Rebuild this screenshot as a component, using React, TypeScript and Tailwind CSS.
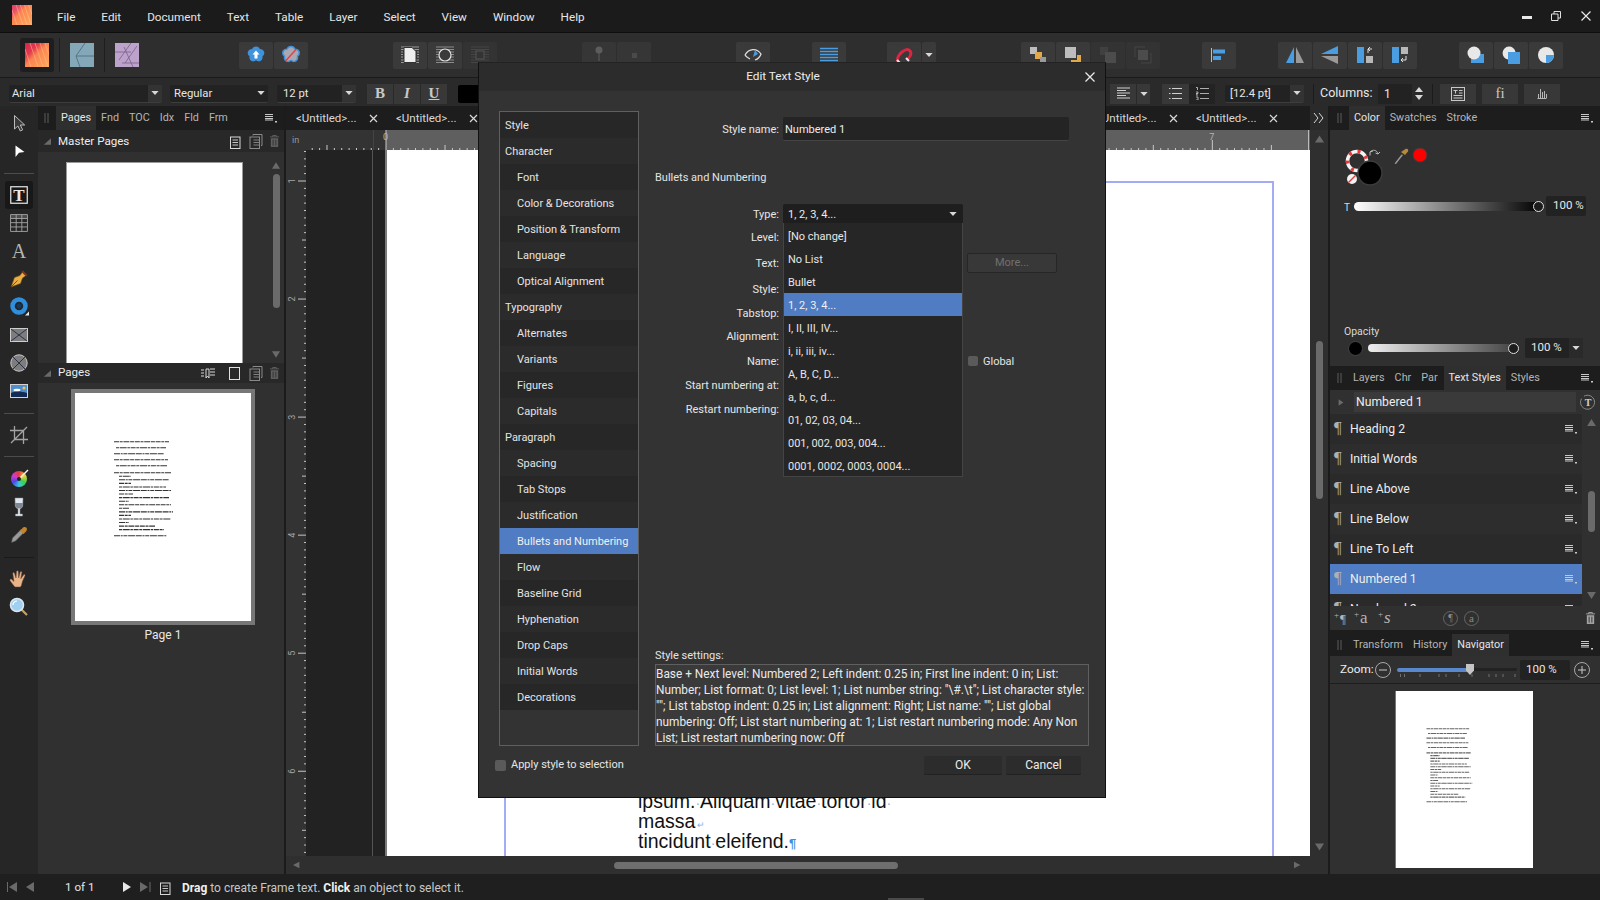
import React from "react";

const Ham = ({ className = "" }: { className?: string }) => (
  <svg width="14" height="12" viewBox="0 0 14 12" className={className}>
    <path d="M1 2.500h8M1 4.500h8M1 6.500h8M1 8h8" stroke="#c8c8c8" strokeWidth="1.200" />
    <rect x="11" y="9" width="2" height="1.500" fill="#c8c8c8" />
  </svg>
);
const Caret = ({ c = "#d8d8d8" }: { c?: string }) => (
  <svg width="8" height="4" viewBox="0 0 9 5"><path d="M0 0h9L4.500 5z" fill={c} /></svg>
);
const Tri = ({ d, c = "#6a6a6a", w = 10, h = 8 }: { d: string; c?: string; w?: number; h?: number }) => (
  <svg width={w} height={h} viewBox="0 0 10 8"><path d={d} fill={c} /></svg>
);
const Btn = ({ children, className = "" }: { children?: React.ReactNode; className?: string }) => (
  <div className={"w-[34px] h-[27px] flex items-center justify-center rounded-[2px] bg-[#3a3a3a] " + className}>{children}</div>
);
const Combo = ({ text, className = "", sep = true, pad = "pl-[4px]" }: { text: string; className?: string; sep?: boolean; pad?: string }) => (
  <div className={"h-[18px] flex items-center rounded-[2px] bg-[#222222] border-b border-[#3d3d3d] " + className}>
    <span className={"flex-1 pt-[2px] text-[11.300px] text-[#e6e6e6] whitespace-nowrap " + pad}>{text}</span>
    <div className={"w-[14px] h-full flex items-center justify-center " + (sep ? "bg-[#333333]" : "")}><Caret /></div>
  </div>
);

const PubLogo = ({ s = 24, id = "pl", light = false }: { s?: number; id?: string; light?: boolean }) => (
  <svg width={s} height={s} viewBox="0 0 24 24">
    <defs>
      <linearGradient id={id} x1="0" y1="0" x2="1" y2="1">
        <stop offset="0" stopColor={light ? "#e0405a" : "#d4234f"} /><stop offset={light ? "0.22" : "0.3"} stopColor={light ? "#e8506a" : "#e23a4e"} /><stop offset={light ? "0.4" : "0.48"} stopColor="#fb8450" /><stop offset="1" stopColor="#ffaa5c" />
      </linearGradient>
    </defs>
    <rect width="24" height="24" fill={`url(#${id})`} />
    <path d="M5 0l8 24M10 0l8 24M15 0l8 24M20 0l4 12M0 6l6 18" stroke={light ? "#ffd0a8" : "#ffc090"} strokeWidth="0.700" opacity="0.750" fill="none" />
  </svg>
);
const DesLogo = () => (
  <svg width="24" height="24" viewBox="0 0 24 24">
    <rect width="24" height="24" fill="#84a8b8" />
    <path d="M15 0L6 13l4 11M6 13h18" stroke="#4f6f80" strokeWidth="0.900" fill="none" />
  </svg>
);
const PhoLogo = () => (
  <svg width="24" height="24" viewBox="0 0 24 24">
    <rect width="24" height="24" fill="#bda3cb" />
    <path d="M16 0L4 17M22 3L10 20M0 9h16M7 20h17M9 4l9 20" stroke="#7a5f8c" strokeWidth="0.800" fill="none" />
  </svg>
);
const Flower = ({ off = false }: { off?: boolean }) => (
  <svg width="20" height="20" viewBox="0 0 20 20">
    <path d="M10 1.500c2.200 0 3.400 1.400 3.900 2.600 1.600.1 3.800 1 4.300 3 .4 1.900-.7 3.200-1.700 4 .3 1.600-.1 4-2 5-1.800.9-3.400.1-4.500-.8-1.100.9-2.700 1.700-4.500.8-1.900-1-2.300-3.400-2-5-1-.8-2.100-2.100-1.700-4 .5-2 2.700-2.900 4.300-3 .5-1.200 1.700-2.600 3.900-2.600z" fill={off ? "#a9a9b5" : "#3f93dc"} stroke={off ? "#3f93dc" : "none"} strokeWidth="1.400" />
    {off ? <path d="M5 15.500L15 4.500" stroke="#ee3a3a" strokeWidth="1.300" /> : <path d="M10 5.500l3.500 4h-2v4h-3v-4h-2z" fill="#fff" />}
  </svg>
);

const Tool = ({ children, active = false }: { children: React.ReactNode; active?: boolean }) => (
  <div className={"w-[28px] h-[28px] flex items-center justify-center rounded-[3px] " + (active ? "bg-[#181818]" : "")}>{children}</div>
);

const ToolRail = () => (
  <div className="w-[38px] bg-[#262626] flex flex-col items-center pt-[3px] shrink-0">
    <Tool><svg width="20" height="20" viewBox="0 0 20 20"><path d="M5.500 2.500v13.500l3.400-3 2.400 5 2.400-1.200-2.400-4.800h4.400z" fill="#3a3a3a" stroke="#bdbdbd" strokeWidth="1" /></svg></Tool>
    <Tool><svg width="20" height="20" viewBox="0 0 20 20"><path d="M6.500 4.500l9 6.500-5.500.8-3.500 4.200z" fill="#fff" /></svg></Tool>
    <div className="w-[30px] h-px bg-[#4c4c4c] mt-[8px] mb-[7px]" />
    <Tool active><svg width="18" height="18" viewBox="0 0 18 18"><rect x="0.750" y="0.750" width="16.500" height="16.500" fill="none" stroke="#e8e8e8" strokeWidth="1.200" /><text x="9" y="14.500" textAnchor="middle" fontFamily="Liberation Serif" fontWeight="700" fontSize="17" fill="#e8e8e8">T</text></svg></Tool>
    <Tool><svg width="18" height="18" viewBox="0 0 16 16"><path d="M.5.5h15v15H.5zM.5 4h15M.5 7.700h15M.5 11.500h15M5.500.5v15M10.500.5v15" fill="none" stroke="#a5a5a5" strokeWidth="0.800" /><rect x="0.500" y="0.500" width="15" height="3.500" fill="#a5a5a5" opacity="0.300" /></svg></Tool>
    <Tool><span className="font-['Liberation_Serif',serif] text-[20px] leading-none text-[#b5b5b5]">A</span></Tool>
    <Tool><svg width="20" height="20" viewBox="0 0 20 20"><path d="M13.500 3l3.500 3.500-3.500 2.500-2 5.500-9.500 3.500 3.500-9.500 5.500-2z" fill="#eaae44" stroke="#7b5216" strokeWidth="0.600" /><path d="M14 1.500l4.500 4.500-1.500 1.500-4.500-4.500z" fill="#7a3a1c" /><path d="M2 18l6.500-6.500" stroke="#5b3a10" strokeWidth="0.800" /></svg></Tool>
    <Tool><svg width="24" height="24" viewBox="0 0 24 24"><circle cx="12" cy="11" r="6.500" fill="none" stroke="#2f8fdc" strokeWidth="4.500" /><circle cx="12" cy="11" r="2.400" fill="#103a60" /><path d="M22 20.500v-4l-4 4z" fill="#e8e8e8" /></svg></Tool>
    <Tool><svg width="18" height="14" viewBox="0 0 18 14"><rect x="0.500" y="0.500" width="17" height="13" fill="#7d7d7d" stroke="#cfcfcf" /><path d="M1 1l16 12M17 1L1 13" stroke="#1e2a44" strokeWidth="0.900" /></svg></Tool>
    <Tool><svg width="18" height="18" viewBox="0 0 18 18"><circle cx="9" cy="9" r="8.200" fill="#7d7d7d" stroke="#c8c8c8" strokeWidth="1" /><path d="M3 3l12 12M15 3L3 15" stroke="#1e2a44" strokeWidth="0.900" /></svg></Tool>
    <Tool><svg width="18" height="14" viewBox="0 0 18 14"><rect width="18" height="14" fill="#d4d4d4" /><rect x="1" y="1" width="16" height="12" fill="#4f8fd0" /><path d="M1 13V9c4-2 10-2 16 0v4z" fill="#122a55" /><ellipse cx="7" cy="6" rx="3.500" ry="1.200" fill="#fff" /><circle cx="14" cy="4" r="1.600" fill="#f2c34a" /></svg></Tool>
    <div className="w-[30px] h-px bg-[#4c4c4c] mt-[8px] mb-[7px]" />
    <Tool><svg width="18" height="18" viewBox="0 0 18 18"><path d="M4.500 0v13.500H18M0 4.500h13.500V18M1 17L17 1" fill="none" stroke="#a3a3a3" strokeWidth="1.300" /></svg></Tool>
    <div className="w-[30px] h-px bg-[#4c4c4c] mt-[7px] mb-[8px]" />
    <Tool><div className="relative w-[16px] h-[16px] rounded-full bg-[conic-gradient(#e63a3a,#e8d63a,#3ad04a,#3ac8e0,#4a4ae0,#d03ad0,#e63a3a)]"><svg className="absolute -right-[2px] -top-[2px]" width="14" height="14" viewBox="0 0 14 14"><path d="M13 1L5 9" stroke="#f5f5f5" strokeWidth="1.400" /><circle cx="4" cy="10" r="2" fill="#222" /></svg></div></Tool>
    <Tool><svg width="14" height="20" viewBox="0 0 14 20"><path d="M3 1h8l-.2 7.500c-.2 2-1.800 3.200-2.800 3.300V17h2.500v2h-7v-2H6v-5.200c-1-.1-2.600-1.300-2.800-3.300z" fill="#dfe6ee" stroke="#8a8a8a" strokeWidth="0.500" /><path d="M3.100 6h7.800l-.1 2.500c-.2 2-2 3-3.800 3s-3.600-1-3.800-3z" fill="#7d8894" /></svg></Tool>
    <Tool><svg width="18" height="18" viewBox="0 0 18 18"><path d="M11 3.500l3 3-8.500 8.500-4 1.500 1-4.500z" fill="#9a9a9a" stroke="#555" strokeWidth="0.500" /><path d="M10 4.500l3.500 3.500 2-2c1.500-1.200 2-3.300.7-4.500-1.200-1.100-3.200-.6-4 .9z" fill="#c2852e" /></svg></Tool>
    <div className="w-[30px] h-px bg-[#1a1a1a] mt-[8px] mb-[7px]" />
    <Tool><svg width="20" height="20" viewBox="0 0 20 20"><path d="M6 18c-1.500-1.500-4-5-5-6.500-.5-1 .8-2 1.800-1L5 12.500 3.800 4.500c-.1-1 1.500-1.300 1.700-.2L7 9 7.500 2.500c.1-1.100 1.800-1 1.800.1L9.700 9l1.500-6c.3-1 1.800-.7 1.700.3L11.800 9.800l2.700-3.800c.7-.9 2-.2 1.500.8-1.200 2.500-2.500 5.200-3 7.200-.4 2-1 4-2 4z" fill="#eab48a" stroke="#6a4a36" strokeWidth="0.500" /></svg></Tool>
    <Tool><svg width="20" height="20" viewBox="0 0 20 20"><path d="M12.500 12.500l5.500 5.500" stroke="#c8a25a" strokeWidth="2.200" /><circle cx="8" cy="8" r="6.500" fill="#9fd0f2" stroke="#dbe6ee" strokeWidth="1.600" /><path d="M4 8a4 4 0 0 1 4-4" stroke="#fff" strokeWidth="1.200" fill="none" /></svg></Tool>
  </div>
);

const dashes = ["5 0.700 3 0.700 6 0.700 4 0.700", "3 0.700 7 0.700 2.500 0.700 5 0.700", "6 0.700 2 0.700 4 0.700 7 0.700"];
const listLens = [52, 12, 50, 12, 47, 52, 14, 50, 10, 52, 10, 54, 12, 52, 10, 36, 45];
const thumbLines: [number, number, number, number][] = [
  [39, 48.700, 55, 0],[41, 54.700, 50, 1],[39, 60.700, 50, 2],[39, 66.700, 54, 0],[41, 72.700, 51, 1],
  ...listLens.map((l, i): [number, number, number, number] => [i === 0 ? 39 : 44, 79.700 + i * 3.560, i === 0 ? l + 5 : l, i % 3]),
  [39, 142.700, 53, 2],
];
const Thumb = ({ w, h, soft = false }: { w: number; h: number; soft?: boolean }) => (
  <svg width={w} height={h} viewBox="0 0 176 228" className="bg-white block">
    {thumbLines.map(([x, y, l, d], i) => (
      <line key={i} x1={x} x2={x + l} y1={y} y2={y} stroke={soft ? "#666" : "#333"} strokeWidth={soft ? 1.400 : 1.100} strokeDasharray={dashes[d]} />
    ))}
  </svg>
);

const PanelTab = ({ t, active = false, className = "" }: { t: string; active?: boolean; className?: string }) => (
  <div className={"h-full flex items-center px-[5px] text-[10.800px] whitespace-nowrap " + (active ? "bg-[#2f2f2f] text-[#e6e6e6] " : "text-[#b5b5b5] ") + className}>{t}</div>
);
const Grip = () => (
  <svg width="5" height="10" viewBox="0 0 5 10" className="shrink-0"><path d="M1 0v10M4 0v10" stroke="#5c5c5c" /></svg>
);
const SmallDoc = ({ c = "#d8d8d8", stack = false }: { c?: string; stack?: boolean }) => (
  <svg width="14" height="15" viewBox="0 0 14 15">
    {stack && <path d="M4 1.500V.5h9v11h-1" fill="none" stroke={c} />}
    <rect x={stack ? 1 : 2.500} y="3" width="9.500" height="11.500" fill="none" stroke={c} />
    <path d="M4.500 6h5.500M4.500 8.500h5.500M4.500 11h5.500" stroke={c} strokeWidth="0.900" />
  </svg>
);
const Trash = ({ c = "#5f5f5f" }: { c?: string }) => (
  <svg width="11" height="14" viewBox="0 0 12 14"><path d="M1 2.500h10M4 2.500V1h4v1.500" stroke={c} fill="none" /><path d="M2 4h8v9.500H2z" fill={c} /><path d="M4.500 5.500v6.500M7.500 5.500v6.500" stroke="#303030" /></svg>
);

const PagesPanel = () => (
  <div className="w-[246px] shrink-0 flex flex-col bg-[#303030]">
    <div className="h-[24px] bg-[#1d1d1d] flex items-center pl-[6px] shrink-0">
      <Grip />
      <div className="w-[7px]" />
      <PanelTab t="Pages" active />
      <PanelTab t="Fnd" />
      <PanelTab t="TOC" />
      <PanelTab t="Idx" />
      <PanelTab t="Fld" />
      <PanelTab t="Frm" />
      <div className="flex-1" />
      <Ham className="mr-[6px]" />
    </div>
    <div className="h-[22px] bg-[#282828] flex items-center pl-[5px] pr-[4px] shrink-0">
      <Tri d="M10 0v8H1z" w={8} h={7} />
      <span className="ml-[7px] pt-[1px] text-[11.600px] text-[#ededed] flex-1">Master Pages</span>
      <SmallDoc />
      <div className="w-[7px]" />
      <SmallDoc c="#8a8a8a" stack />
      <div className="w-[6px]" />
      <Trash />
    </div>
    <div className="h-[211px] flex pl-[28px] pt-[10px] shrink-0 overflow-hidden">
      <div className="w-[177px] h-[201px] bg-white border border-[#9a9a9a] border-b-0" />
      <div className="w-[12px] ml-[27px] flex flex-col items-center">
        <Tri d="M5 0l5 8H0z" w={8} h={7} />
        <div className="w-[7px] h-[134px] mt-[5px] rounded-[4px] bg-[#6a6a6a]" />
        <div className="mt-[43px]"><Tri d="M0 0h10L5 8z" w={8} h={7} /></div>
      </div>
    </div>
    <div className="h-[20px] bg-[#282828] flex items-center pl-[5px] pr-[4px] shrink-0">
      <Tri d="M10 0v8H1z" w={8} h={7} />
      <span className="ml-[7px] text-[11.600px] text-[#ededed] flex-1">Pages</span>
      <svg width="14" height="12" viewBox="0 0 14 12" className="mr-[14px]"><path d="M0 3h3M0 6h3M0 9h3M5 2h3v9l-1.500-2L5 11zM9 2h5M9 5h5M9 8h5" stroke="#d8d8d8" fill="none" /></svg>
      <svg width="11" height="13" viewBox="0 0 11 13" className="mr-[9px]"><rect x="0.500" y="0.500" width="10" height="12" fill="none" stroke="#e0e0e0" /></svg>
      <SmallDoc c="#8a8a8a" stack />
      <div className="w-[6px]" />
      <Trash />
    </div>
    <div className="flex-1 flex flex-col items-center pt-[6px] pl-[4px]">
      <div className="border-[4px] border-[#777777]"><Thumb w={176} h={228} /></div>
      <div className="mt-[1px] text-[12px] leading-[18px] text-[#e8e8e8]">Page 1</div>
    </div>
  </div>
);

const PPI = 118.050;
const TopRuler = () => {
  const ticks = [];
  for (let i = -13; i <= 120; i++) {
    const x = 100 + (i * PPI) / 16;
    if (x < 20 || x > 1022) continue;
    const h = i % 16 === 0 ? (i === 0 ? 20 : 10) : i % 8 === 0 ? 5 : 2;
    ticks.push(<line key={i} x1={x} x2={x} y1={20 - h} y2={20} stroke="#c9c9c9" />);
  }
  return (
    <svg width="1024" height="20" viewBox="0 0 1024 20" className="block">
      <rect width="1024" height="20" fill="#333333" />
      <rect x="100" width="924" height="20" fill="#5f5f5f" />
      <rect x="87" width="1" height="20" fill="#444" />
      <rect x="1022" width="1" height="20" fill="#bbb" />
      {ticks}
      <text x="6" y="13" fontSize="9" fontFamily="Roboto" fill="#9a9a9a">in</text>
      {[0, 7].map((n) => (
        <text key={n} x={100 + n * PPI - 3} y="10" fontSize="9" fontFamily="Roboto" fill="#b5b5b5">{n}</text>
      ))}
    </svg>
  );
};
const LeftRuler = () => {
  const ticks = [];
  for (let i = -7; i <= 96; i++) {
    const y = 31 + (i * PPI) / 16;
    if (y < 0 || y > 706) continue;
    const w = i % 16 === 0 ? 8 : i % 8 === 0 ? 4 : 2;
    ticks.push(<line key={i} x1={20 - w} x2={20} y1={y} y2={y} stroke="#c4c4c4" />);
  }
  return (
    <svg width="20" height="706" viewBox="0 0 20 706" className="block shrink-0">
      <rect width="20" height="706" fill="#333333" />
      {ticks}
      {[1, 2, 3, 4, 5, 6].map((n) => (
        <text key={n} x="0" y="0" fontSize="9" fontFamily="Roboto" fill="#a5a5a5" textAnchor="middle" transform={`translate(9 ${31 + (n - 1) * PPI}) rotate(-90)`}>{n}</text>
      ))}
    </svg>
  );
};

const Dot = () => <span className="text-[14px] text-[#7fb6e6]">·</span>;

const DocArea = () => (
  <div className="w-[1024px] shrink-0 flex flex-col ml-[2px]">
    <div className="h-[24px] bg-[#1d1d1d] flex shrink-0">
      {Array.from({ length: 10 }).map((_, i) => (
        <div key={i} className="w-[100px] shrink-0 flex items-center pl-[10px] pt-[1px] text-[11.500px] text-[#d8d8d8]">
          <span className="w-[73px] whitespace-nowrap">&lt;Untitled&gt;...</span>
          <svg width="9" height="9" viewBox="0 0 9 9"><path d="M1 1l7 7M8 1L1 8" stroke="#d8d8d8" strokeWidth="1.200" /></svg>
        </div>
      ))}
    </div>
    <TopRuler />
    <div className="h-[706px] flex shrink-0">
      <LeftRuler />
      <div className="w-[67px] bg-[#222222] border-r border-[#555555] shrink-0" />
      <div className="w-[12px] bg-[#222222] shrink-0" />
      <div className="flex-1 bg-white border-l-[2px] border-[#7a7a7a] relative overflow-hidden">
        <div className="absolute left-[117px] top-[31px] w-[770px] h-[720px] border-[2px] border-[#a4abf4]" />
        <div className="absolute left-[251px] bottom-[5px] font-['Liberation_Sans',sans-serif] text-[19.500px] text-[#111] whitespace-nowrap">
          <div className="h-[20px] leading-[20px]">ipsum.<Dot />Aliquam<Dot />vitae<Dot />tortor<Dot />id<Dot /></div>
          <div className="h-[20px] leading-[20px]">massa<span className="text-[9px] text-[#7fb6e6] ml-[2px]">↵</span></div>
          <div className="h-[20px] leading-[20px]">tincidunt<Dot />eleifend.<span className="text-[13px] text-[#3f8fdc] font-bold">¶</span></div>
        </div>
      </div>
    </div>
    <div className="h-[18px] bg-[#2f2f2f] flex items-center pl-[7px] shrink-0">
      <Tri d="M8 0v8L0 4z" w={8} h={8} />
      <div className="w-[284px] h-[7px] ml-[313px] rounded-[4px] bg-[#6e6e6e]" />
      <div className="ml-[396px]"><Tri d="M0 0v8l8-4z" w={8} h={8} /></div>
    </div>
  </div>
);

const StyleRow = ({ t, active = false, alt = false }: { t: string; active?: boolean; alt?: boolean }) => (
  <div className={"h-[30px] shrink-0 flex items-center pl-[4px] pr-[4px] " + (active ? "bg-[#4f7cc2]" : alt ? "bg-[#2a2a2a]" : "bg-[#2d2d2d]")}>
    <span className="w-[16px] -mt-[3px] text-[17px] leading-none text-[#b0b0b0] font-['Liberation_Serif',serif]">¶</span>
    <span className="flex-1 text-[12.200px] text-[#ededed]">{t}</span>
    <Ham />
  </div>
);

const NumBox = ({ t, className = "" }: { t: string; className?: string }) => (
  <div className={"h-[20px] flex items-center rounded-[2px] bg-[#222222] text-[11.500px] whitespace-nowrap text-[#e8e8e8] " + className}>{t}</div>
);
const Knob = () => <div className="w-[11px] h-[11px] rounded-full border-[1.500px] border-[#e0e0e0] bg-[#1c1c1c] shrink-0" />;

const RightPanel = () => (
  <div className="w-[270px] shrink-0 flex flex-col bg-[#303030] ml-[2px]">
    <div className="h-[24px] bg-[#1d1d1d] flex items-center pl-[7px] shrink-0">
      <Grip />
      <div className="w-[7px]" />
      <PanelTab t="Color" active />
      <PanelTab t="Swatches" />
      <PanelTab t="Stroke" />
      <div className="flex-1" />
      <Ham className="mr-[6px]" />
    </div>
    <div className="h-[236px] flex flex-col shrink-0 pl-[14px]">
      <svg width="96" height="52" viewBox="0 0 96 52" className="mt-[11px] block">
        <circle cx="13" cy="20" r="9.500" fill="none" stroke="#f4f4f4" strokeWidth="3.500" />
        <circle cx="13" cy="20" r="9.500" fill="none" stroke="#e33b3b" strokeWidth="3.500" strokeDasharray="3 6" />
        <circle cx="26" cy="32" r="12" fill="#000" stroke="#3c3c3c" strokeWidth="1.500" />
        <circle cx="8" cy="38" r="5" fill="#f2f2f2" /><path d="M4.500 41.500l7-7" stroke="#e33b3b" strokeWidth="1.500" />
        <path d="M26 11c3-3 7-2 8 2M26 11l3-1M26 11v3.500M34 13l2-2M34 13l-2.500-1" stroke="#b8b8b8" fill="none" />
        <path d="M59 14l-7 9-1.500-.5 7-9z" fill="#999" /><path d="M57 11l4 3 3-3.500c1-2-1-3.500-2.500-2.500z" fill="#b58a3e" />
        <circle cx="76" cy="14" r="7" fill="#ff0000" stroke="#3c3c3c" />
      </svg>
      <div className="h-[20px] mt-[3px] flex items-center">
        <span className="w-[10px] text-[10px] text-[#d8d8d8] mt-[2px]">T</span>
        <div className="w-[187px] h-[9px] rounded-[5px] bg-[linear-gradient(90deg,#fff,#000)] flex justify-end items-center">
          <div className="-mr-[3px]"><Knob /></div>
        </div>
        <NumBox t="100 %" className="w-[40px] ml-[5px] pl-[7px]" />
      </div>
      <div className="text-[10.500px] leading-[12px] mt-[110px] text-[#d8d8d8]">Opacity</div>
      <div className="h-[20px] flex items-center">
        <div className="w-[15px] h-[15px] rounded-full bg-black border border-[#444] ml-[4px]" />
        <div className="w-[146px] h-[8px] rounded-[4px] ml-[5px] bg-[linear-gradient(90deg,#eee,#444)] flex justify-end items-center">
          <div className="-mr-[5px]"><Knob /></div>
        </div>
        <NumBox t="100 %" className="w-[44px] ml-[11px] pl-[6px] rounded-r-none" />
        <div className="w-[14px] h-[20px] bg-[#2a2a2a] flex items-center justify-center"><Caret /></div>
      </div>
    </div>

    <div className="h-[24px] bg-[#1d1d1d] flex items-center pl-[7px] shrink-0">
      <Grip />
      <div className="w-[6px]" />
      <PanelTab t="Layers" />
      <PanelTab t="Chr" />
      <PanelTab t="Par" className="mr-[1px]" />
      <PanelTab t="Text Styles" active />
      <PanelTab t="Styles" />
      <div className="flex-1" />
      <Ham className="mr-[6px]" />
    </div>
    <div className="h-[24px] flex items-center pl-[7px] shrink-0">
      <Tri d="M2 0l6 4-6 4z" w={8} h={9} />
      <div className="ml-[9px] w-[222px] h-[20px] bg-[#3a3a3a] flex items-center pl-[2px] pt-[1px] text-[12.200px] text-[#ededed]">Numbered 1</div>
      <svg width="16" height="16" viewBox="0 0 16 16" className="ml-[4px]"><path d="M4 2.200a7 7 0 1 1-2.500 2.500" fill="none" stroke="#8a8a8a" /><text x="8" y="11.500" textAnchor="middle" fontSize="10" fontWeight="700" fontFamily="Liberation Serif" fill="#d0d0d0">T</text></svg>
    </div>
    <div className="h-[192px] flex shrink-0 overflow-hidden">
      <div className="w-[252px] flex flex-col shrink-0">
        <StyleRow t="Heading 2" alt />
        <StyleRow t="Initial Words" />
        <StyleRow t="Line Above" alt />
        <StyleRow t="Line Below" />
        <StyleRow t="Line To Left" alt />
        <StyleRow t="Numbered 1" active />
        <StyleRow t="Numbered 2" alt />
      </div>
      <div className="flex-1 flex flex-col items-center pt-[5px]">
        <Tri d="M5 0l5 8H0z" w={9} h={7} />
        <div className="w-[7px] h-[41px] mt-[65px] rounded-[4px] bg-[#6a6a6a]" />
        <div className="mt-[60px]"><Tri d="M0 0h10L5 8z" w={9} h={7} /></div>
      </div>
    </div>
    <div className="h-[24px] flex items-center pl-[4px] pr-[4px] shrink-0 font-['Liberation_Serif',serif] text-[#b5b5b5]">
      <div className="w-[20px] flex items-start"><span className="text-[9px] leading-[12px] mr-[1px]">+</span><span className="text-[13px] leading-[16px] mt-[2px]">¶</span></div>
      <div className="w-[24px] flex items-start"><span className="text-[9px] leading-[12px] mr-[1px]">+</span><span className="text-[17px] leading-[20px]">a</span></div>
      <div className="w-[65px] flex items-start"><span className="text-[9px] leading-[12px] mr-[1px]">+</span><span className="text-[17px] leading-[20px] italic">s</span></div>
      <div className="w-[15px] h-[15px] rounded-full border border-[#666] flex items-center justify-center text-[10px] leading-[12px] text-[#8a8a8a] mr-[6px]">¶</div>
      <div className="w-[15px] h-[15px] rounded-full border border-[#666] flex items-center justify-center text-[11px] leading-[12px] text-[#8a8a8a]">a</div>
      <div className="flex-1" />
      <Trash c="#a5a5a5" />
    </div>
    <div className="h-[4px] bg-[#1d1d1d] shrink-0" />

    <div className="h-[22px] bg-[#1d1d1d] flex items-center pl-[7px] shrink-0">
      <Grip />
      <div className="w-[6px]" />
      <PanelTab t="Transform" />
      <PanelTab t="History" />
      <PanelTab t="Navigator" active />
      <div className="flex-1" />
      <Ham className="mr-[6px]" />
    </div>
    <div className="h-[28px] flex items-center pl-[10px] border-b border-[#1d1d1d] shrink-0">
      <span className="text-[11.800px] text-[#ededed] w-[35px]">Zoom:</span>
      <svg width="16" height="16" viewBox="0 0 16 16"><circle cx="8" cy="8" r="7.500" fill="none" stroke="#a8a8a8" /><path d="M4 8h8" stroke="#c8c8c8" /></svg>
      <div className="relative w-[120px] h-[3px] ml-[6px] bg-[#222222] rounded-[2px]">
        <div className="w-[73px] h-[4px] bg-[#5a88cc] rounded-[2px]" />
        <div className="absolute left-[69px] -top-[4px] w-[8px] h-[11px] bg-[#c4c4c4] [clip-path:polygon(0_0,100%_0,100%_60%,50%_100%,0_60%)]" />
        <svg width="120" height="5" viewBox="0 0 120 5" className="absolute left-0 top-[6px]"><path d="M3.500 0v3M7.500 0v3M23 0v3M42 0v3M49 0v3M62 0v3M75 0v3M92 0v3M99 0v3M106 0v3M118 0v3" stroke="#707070" /></svg>
      </div>
      <NumBox t="100 %" className="w-[50px] ml-[3px] pl-[6px]" />
      <svg width="16" height="16" viewBox="0 0 16 16" className="ml-[4px]"><circle cx="8" cy="8" r="7.500" fill="none" stroke="#a8a8a8" /><path d="M4 8h8M8 4v8" stroke="#c8c8c8" /></svg>
    </div>
    <div className="flex-1 flex flex-col items-center pt-[7px] pr-[2px]">
      <div className="border-l border-[#777]"><Thumb w={137} h={177} soft /></div>
    </div>
  </div>
);

const sections: [string, boolean][] = [
  ["Style", false],["Character", false],["Font", true],["Color & Decorations", true],["Position & Transform", true],["Language", true],["Optical Alignment", true],
  ["Typography", false],["Alternates", true],["Variants", true],["Figures", true],["Capitals", true],["Paragraph", false],["Spacing", true],["Tab Stops", true],["Justification", true],
  ["Bullets and Numbering", true],["Flow", true],["Baseline Grid", true],["Hyphenation", true],["Drop Caps", true],["Initial Words", true],["Decorations", true],
];
const listOptions = ["[No change]","No List","Bullet","1, 2, 3, 4...","I, II, III, IV...","i, ii, iii, iv...","A, B, C, D...","a, b, c, d...","01, 02, 03, 04...","001, 002, 003, 004...","0001, 0002, 0003, 0004..."];

const FormRow = ({ label, className = "", children }: { label: string; className?: string; children?: React.ReactNode }) => (
  <div className={"h-[20px] flex items-center shrink-0 " + className}>
    <div className="w-[124px] pt-[2px] text-right text-[#e6e6e6] whitespace-nowrap">{label}</div>
    {children}
  </div>
);

const Dialog = () => (
  <div className="absolute left-[478px] top-[62px] w-[628px] h-[736px] z-10 bg-[#333333] border border-[#111111] border-t-[#222] flex flex-col text-[11px]">
    <div className="h-[28px] bg-[#2c2c2c] flex items-center justify-center pr-[18px] relative shrink-0">
      <span className="text-[11.800px] text-[#ededed]">Edit Text Style</span>
      <svg className="absolute right-[10px] top-[9px]" width="10" height="10" viewBox="0 0 10 10"><path d="M.5.5l9 9M9.500.5l-9 9" stroke="#e8e8e8" strokeWidth="1.300" /></svg>
    </div>
    <div className="flex pl-[20px] pt-[20px] shrink-0">
      <div className="w-[140px] h-[635px] border border-[#5f5f5f] shrink-0">
        {sections.map(([s, ind], i) => (
          <div key={s} className={"h-[26px] pt-[2px] flex items-center whitespace-nowrap " + (ind ? "pl-[17px] " : "pl-[5px] ") + (s === "Bullets and Numbering" ? "bg-[#4f7cc2] text-[#f0f0f0]" : (i % 2 ? "bg-[#2b2b2b] " : "bg-[#272727] ") + "text-[#e4e4e4]")}>{s}</div>
        ))}
      </div>
      <div className="w-[434px] ml-[16px] h-[635px] flex flex-col shrink-0 relative">
        <div className="h-[24px] mt-[6px] flex items-center shrink-0">
          <div className="w-[124px] pt-[3px] text-right text-[#e6e6e6]">Style name:</div>
          <div className="ml-[4px] w-[286px] h-[24px] bg-[#242424] rounded-[2px] border-b border-[#444] flex items-center pl-[2px] pt-[3px] text-[#ededed]">Numbered 1</div>
        </div>
        <div className="mt-[29px] h-[16px] leading-[16px] text-[#e4e4e4] shrink-0">Bullets and Numbering</div>
        <FormRow label="Type:" className="mt-[18px]">
          <div className="ml-[4px] w-[180px] h-[20px] bg-[#1e1e1e] rounded-[2px] flex items-center pl-[5px] pr-[6px] text-[#ededed]">
            <span className="flex-1 pt-[2px]">1, 2, 3, 4...</span><Caret />
          </div>
        </FormRow>
        <FormRow label="Level:" className="mt-[3px]" />
        <FormRow label="Text:" className="mt-[6px]">
          <div className="ml-[188px] w-[90px] h-[20px] rounded-[2px] border border-[#262626] bg-[#383838] flex items-center justify-center pt-[1px] text-[#707070]">More...</div>
        </FormRow>
        <FormRow label="Style:" className="mt-[6px]" />
        <FormRow label="Tabstop:" className="mt-[4px]" />
        <FormRow label="Alignment:" className="mt-[3px]" />
        <FormRow label="Name:" className="mt-[5px]">
          <div className="ml-[189px] w-[10px] h-[10px] rounded-[2px] bg-[#5a5a5a]" />
          <span className="ml-[5px] pt-[2px] text-[#e4e4e4]">Global</span>
        </FormRow>
        <FormRow label="Start numbering at:" className="mt-[4px]" />
        <FormRow label="Restart numbering:" className="mt-[4px]" />

        <div className="absolute left-[128px] top-[112px] w-[180px] h-[254px] bg-[#262626] border border-[#444444] border-t-0 pt-[1px] z-20">
          {listOptions.map((o) => (
            <div key={o} className={"h-[23px] flex items-center pl-[4px] pt-[3px] whitespace-nowrap " + (o === "1, 2, 3, 4..." ? "bg-[#4f7cc2] text-[#f0f0f0]" : "text-[#e6e6e6]")}>{o}</div>
          ))}
        </div>

        <div className="mt-auto leading-[14px] pt-[1px] h-[14px] text-[#e4e4e4]">Style settings:</div>
        <div className="mt-[2px] h-[82px] border border-[#5f5f5f] bg-[#3a3a3a] pt-[1px] text-[11.850px] leading-[16px] text-[#eaeaea] whitespace-nowrap">
          <div>Base + Next level: Numbered 2; Left indent: 0.25 in; First line indent: 0 in; List:</div>
          <div>Number; List format: 0; List level: 1; List number string: "\#.\t"; List character style:</div>
          <div>""; List tabstop indent: 0.25 in; List alignment: Right; List name: ""; List global</div>
          <div>numbering: Off; List start numbering at: 1; List restart numbering mode: Any Non</div>
          <div>List; List restart numbering now: Off</div>
        </div>
      </div>
    </div>
    <div className="flex items-center pl-[16px] mt-[9px] h-[20px] shrink-0">
      <div className="w-[11px] h-[11px] rounded-[2px] bg-[#5a5a5a]" />
      <span className="ml-[5px] pt-[1px] text-[#e6e6e6]">Apply style to selection</span>
      <div className="flex-1" />
      <div className="w-[78px] h-[19px] rounded-[2px] bg-[#2c2c2c] border-b border-[#222] flex items-center justify-center text-[12px] text-[#ededed]">OK</div>
      <div className="ml-[4px] w-[75px] h-[19px] rounded-[2px] bg-[#2c2c2c] border-b border-[#222] flex items-center justify-center text-[12px] text-[#ededed] mr-[24px]">Cancel</div>
    </div>
  </div>
);

const G = ({ children }: { children: React.ReactNode }) => <div className="flex gap-px">{children}</div>;

const Toolbar = () => (
  <div className="h-[45px] bg-[#2e2e2e] border-b border-[#1b1b1b] flex items-center shrink-0">
    <div className="ml-[20px] w-[34px] h-[34px] bg-[#1e1e1e] rounded-[3px] flex items-center justify-center"><PubLogo /></div>
    <div className="ml-[5px] w-px h-[34px] bg-[#1e1e1e]" />
    <div className="ml-[10px]"><DesLogo /></div>
    <div className="ml-[10px] w-px h-[34px] bg-[#1e1e1e]" />
    <div className="ml-[10px]"><PhoLogo /></div>
    <div className="ml-[100px]"><G><Btn><Flower /></Btn><Btn><Flower off /></Btn></G></div>
    <div className="ml-[85px]"><G>
      <Btn><svg width="18" height="18" viewBox="0 0 18 18"><path d="M0 1h18M0 3.500h18M0 14h18M0 16.500h18M0 6h2M0 8.500h2M0 11h2M16 6h2M16 8.500h2M16 11h2" stroke="#9a9a9a" /><path d="M3 1.500h8l4 4v11H3z" fill="#eee" stroke="#333" /></svg></Btn>
      <Btn><svg width="18" height="18" viewBox="0 0 18 18"><path d="M0 1h18M0 3.500h18M0 6h18M0 8.500h18M0 11h18M0 14h18M0 16.500h18" stroke="#8a8a8a" /><circle cx="9" cy="9" r="6" fill="#3a3a3a" stroke="#e0e0e0" strokeWidth="1.200" /></svg></Btn>
      <Btn className="bg-[#333333]"><svg width="18" height="18" viewBox="0 0 18 18"><path d="M0 1h18M0 3.500h18M0 6h18M0 8.500h18M0 11h18M0 14h18M0 16.500h18" stroke="#454545" /><rect x="5" y="5" width="8" height="8" fill="#333" stroke="#555" /></svg></Btn>
    </G></div>
    <div className="ml-[85px]"><G>
      <Btn className="bg-[#363636]"><svg width="10" height="20" viewBox="0 0 10 20"><circle cx="5" cy="5" r="3.500" fill="#5c5c5c" /><path d="M5 8v8" stroke="#5c5c5c" /></svg></Btn>
      <Btn className="bg-[#363636]"><div className="w-[5px] h-[5px] bg-[#4a4a4a]" /></Btn>
    </G></div>
    <Btn className="ml-[85px]"><svg width="18" height="16" viewBox="0 0 18 16"><path d="M1 8c4-7 12-7 16-1-1 3-3 5-6 6M6 12c-2-1-4-2-5-4" fill="none" stroke="#e0e0e0" strokeWidth="1.300" /><path d="M9 10l2-7 3 4z" fill="#4a9de0" /></svg></Btn>
    <Btn className="ml-[42px]"><svg width="18" height="16" viewBox="0 0 18 16"><path d="M0 1.500h18M0 4.500h18M0 7.500h18M0 10.500h18M0 13.500h18" stroke="#4a9de0" strokeWidth="1.300" /></svg></Btn>
    <div className="ml-[41px] flex">
      <Btn className="bg-[#1c1c1c]"><svg width="18" height="18" viewBox="0 0 18 18"><path d="M3 15.500c-1.500-3 1-7 4-9.500s6-3.500 8-1 0 6-3 9" fill="none" stroke="#dc2540" strokeWidth="3" /><path d="M2 14l3 3M11 12l3 3" stroke="#e8e8e8" strokeWidth="2" /></svg></Btn>
      <div className="w-[14px] h-[27px] ml-px bg-[#3a3a3a] rounded-[2px] flex items-center justify-center"><Caret /></div>
    </div>
    <div className="ml-[85px]"><G>
      <Btn><svg width="18" height="18" viewBox="0 0 18 18"><rect x="1" y="1" width="7" height="7" fill="#bdbdbd" /><rect x="6" y="6" width="7" height="7" fill="#e2a94a" /><rect x="11" y="11" width="6" height="6" fill="#9a9a9a" /></svg></Btn>
      <Btn><svg width="18" height="18" viewBox="0 0 18 18"><rect x="1" y="1" width="11" height="11" fill="#bdbdbd" /><path d="M13 9h4v8H7v-3h6z" fill="#e2a94a" /></svg></Btn>
      <Btn className="bg-[#333333]"><svg width="18" height="18" viewBox="0 0 18 18"><rect x="1" y="1" width="8" height="8" fill="#404040" /><rect x="6" y="6" width="11" height="11" fill="#4c4c4c" /></svg></Btn>
      <Btn className="bg-[#333333]"><svg width="18" height="18" viewBox="0 0 18 18"><rect x="4" y="4" width="10" height="10" fill="#4c4c4c" /><path d="M1 1h10M1 1v10M7 17h10V7" fill="none" stroke="#444" /></svg></Btn>
    </G></div>
    <Btn className="ml-[42px]"><svg width="16" height="14" viewBox="0 0 16 14"><path d="M.5 0v14" stroke="#bdbdbd" /><rect x="2" y="1.500" width="12" height="4" fill="#4a9de0" /><rect x="2" y="8" width="8" height="4" fill="#4a9de0" /></svg></Btn>
    <div className="ml-[42px]"><G>
      <Btn><svg width="18" height="18" viewBox="0 0 18 18"><path d="M8 1v16H0z" fill="#4a9de0" /><path d="M10 1v16h8z" fill="#9a9a9a" /></svg></Btn>
      <Btn><svg width="18" height="18" viewBox="0 0 18 18"><path d="M17 0v8H0z" fill="#4a9de0" /><path d="M17 10v8L0 10z" fill="#9a9a9a" /></svg></Btn>
      <Btn><svg width="18" height="18" viewBox="0 0 18 18"><rect x="1" y="1" width="7" height="16" fill="#4a9de0" /><rect x="10" y="10" width="7" height="7" fill="#b8b8b8" /><path d="M12 7V3h4M12 3l2-2M12 3l2 2" stroke="#e0e0e0" fill="none" /></svg></Btn>
      <Btn><svg width="18" height="18" viewBox="0 0 18 18"><rect x="1" y="1" width="7" height="16" fill="#4a9de0" /><rect x="10" y="1" width="7" height="7" fill="#b8b8b8" /><path d="M15 10v4h-5M10 14l2-2M10 14l2 2" stroke="#e0e0e0" fill="none" /></svg></Btn>
    </G></div>
    <div className="ml-[42px]"><G>
      <Btn><svg width="18" height="18" viewBox="0 0 18 18"><path d="M8 8h9v9H4v-4h4z" fill="#4a9de0" /><circle cx="7" cy="7" r="6.500" fill="#e8e8e8" /></svg></Btn>
      <Btn><svg width="18" height="18" viewBox="0 0 18 18"><rect x="6" y="6" width="12" height="12" fill="#4a9de0" /><path d="M6 13.500A6.500 6.500 0 1 1 13.500 6H6z" fill="#e8e8e8" /></svg></Btn>
      <Btn><svg width="18" height="18" viewBox="0 0 18 18"><circle cx="9" cy="9" r="8" fill="#e8e8e8" /><path d="M9 9h8a8 8 0 0 1-8 8z" fill="#4a9de0" /></svg></Btn>
    </G></div>
  </div>
);

const FmtBtn = ({ children, className = "" }: { children: React.ReactNode; className?: string }) => (
  <div className={"h-[20px] flex items-center justify-center bg-[#383838] font-['Liberation_Serif',serif] text-[15px] text-[#c8c8c8] " + className}>{children}</div>
);

const FormatBar = () => (
  <div className="h-[28px] bg-[#2a2a2a] flex items-center pt-[3px] shrink-0">
    <Combo text="Arial" className="ml-[9px] w-[153px]" pad="pl-[3px]" />
    <Combo text="Regular" className="ml-[8px] w-[98px]" sep={false} />
    <Combo text="12 pt" className="ml-[9px] w-[79px]" pad="pl-[6px]" />
    <div className="ml-[11px] flex gap-px">
      <FmtBtn className="w-[26px] font-bold">B</FmtBtn>
      <FmtBtn className="w-[26px] italic font-bold">I</FmtBtn>
      <FmtBtn className="w-[26px] font-bold underline">U</FmtBtn>
    </div>
    <div className="ml-[11px] w-[40px] h-[18px] bg-black rounded-[2px]" />
    <div className="ml-[612px] w-[40px] h-[20px] flex gap-px">
      <div className="w-[26px] bg-[#383838] flex items-center justify-center"><svg width="13" height="13" viewBox="0 0 13 13"><path d="M0 1h13M0 3.500h9M0 6h13M0 8.500h9M0 11h13" stroke="#d0d0d0" /></svg></div>
      <div className="w-[13px] bg-[#383838] flex items-center justify-center"><Caret /></div>
    </div>
    <div className="ml-[12px] flex">
      <div className="w-[27px] h-[20px] bg-[#383838] flex items-center justify-center"><svg width="13" height="13" viewBox="0 0 13 13"><path d="M3 1.500h10M3 6.500h10M3 11.500h10M0 1.500h1.500M0 6.500h1.500M0 11.500h1.500" stroke="#d0d0d0" /></svg></div>
      <div className="w-[26px] h-[20px] bg-[#232323] flex items-center justify-center"><svg width="13" height="13" viewBox="0 0 13 13"><path d="M4 1.500h9M4 6.500h9M4 11.500h9M0 .5h1.500v2.500M0 5h2v1.500H0V8h2M0 10h2v3H0" stroke="#d0d0d0" fill="none" strokeWidth="0.800" /></svg></div>
    </div>
    <Combo text="[12.4 pt]" className="ml-[10px] w-[79px]" pad="pl-[5px]" />
    <div className="ml-[9px] w-px h-[20px] bg-[#1b1b1b]" />
    <span className="ml-[6px] w-[58px] text-[12.500px] text-[#e8e8e8]">Columns:</span>
    <div className="w-[34px] h-[20px] bg-[#222222] rounded-[2px] flex items-center pl-[6px] text-[12px] text-[#e8e8e8]">1</div>
    <div className="w-[14px] h-[20px] flex flex-col items-center justify-center gap-[3px]"><svg width="8" height="5" viewBox="0 0 8 5"><path d="M4 0l4 5H0z" fill="#d8d8d8" /></svg><svg width="8" height="5" viewBox="0 0 8 5"><path d="M0 0h8L4 5z" fill="#d8d8d8" /></svg></div>
    <div className="ml-[6px] w-px h-[20px] bg-[#1b1b1b]" />
    <FmtBtn className="ml-[7px] w-[36px]"><svg width="14" height="14" viewBox="0 0 14 14"><rect x="0.500" y="0.500" width="13" height="13" fill="none" stroke="#c8c8c8" /><path d="M2.500 3.500h4M4.500 3.500v3M8 3.500h3.500M8 6h3.500M2.500 8.500h9M2.500 11h9" stroke="#c8c8c8" /></svg></FmtBtn>
    <FmtBtn className="ml-[6px] w-[36px] text-[15px]">fi</FmtBtn>
    <FmtBtn className="ml-[6px] w-[36px] bg-[#262626]"><svg width="10" height="11" viewBox="0 0 10 11"><path d="M.5 10.500h9M1.500 10V6M3.500 10V1M5.500 10V4M7.500 10V3M9.500 10V6" stroke="#d8d8d8" strokeWidth="0.800" /></svg></FmtBtn>
  </div>
);

const MenuBar = () => (
  <div className="h-[33px] bg-[#1b1b1b] border-b border-[#0e0e0e] flex items-center shrink-0">
    <div className="ml-[12px] -mt-[2px]"><PubLogo s={20} id="pl2" light /></div>
    <div className="ml-[25px] pt-[4px] flex gap-[26px] text-[11.700px] text-[#e6e6e6]">
      {["File","Edit","Document","Text","Table","Layer","Select","View","Window","Help"].map((m) => <span key={m}>{m}</span>)}
    </div>
    <div className="flex-1" />
    <svg width="10" height="3" viewBox="0 0 10 3" className="mt-[2px]"><rect width="10" height="3" fill="#e8e8e8" /></svg>
    <svg width="10" height="10" viewBox="0 0 10 10" className="ml-[19px]"><path d="M.5 3h6.500v6.500H.5zM3 3V.5h6.500V7H7" fill="none" stroke="#e0e0e0" /></svg>
    <svg width="10" height="10" viewBox="0 0 10 10" className="ml-[20px] mr-[9px]"><path d="M.5.5l9 9M9.500.5l-9 9" stroke="#e8e8e8" strokeWidth="1.200" /></svg>
  </div>
);

const Status = () => (
  <div className="h-[26px] bg-[#1f1f1f] flex items-center shrink-0 relative">
    <svg width="11" height="10" viewBox="0 0 11 10" className="ml-[7px]"><path d="M.5 0v10" stroke="#6a6a6a" /><path d="M10 0v10L2 5z" fill="#6a6a6a" /></svg>
    <svg width="8" height="10" viewBox="0 0 8 10" className="ml-[8px]"><path d="M8 0v10L0 5z" fill="#6a6a6a" /></svg>
    <span className="ml-[31px] pt-[1px] w-[58px] text-[11.600px] text-[#e6e6e6]">1 of 1</span>
    <svg width="8" height="10" viewBox="0 0 8 10"><path d="M0 0v10l8-5z" fill="#e8e8e8" /></svg>
    <svg width="11" height="10" viewBox="0 0 11 10" className="ml-[9px]"><path d="M0 0v10l8-5z" fill="#6a6a6a" /><path d="M10 0v10" stroke="#6a6a6a" /></svg>
    <div className="ml-[7px]"><SmallDoc /></div>
    <div className="ml-[10px] pt-[1px] text-[12px] text-[#c8c8c8] whitespace-nowrap"><b className="text-[#f0f0f0]">Drag</b> to create Frame text. <b className="text-[#f0f0f0]">Click</b> an object to select it.</div>
    <div className="absolute left-[888px] bottom-0 w-[36px] h-[2px] bg-[#4a4a4a]" />
  </div>
);

export default function App() {
  return (
    <div className="w-[1600px] h-[900px] relative overflow-hidden flex flex-col bg-[#1b1b1b] text-[#e6e6e6] font-['Roboto',sans-serif] text-[12px]">
      <MenuBar />
      <Toolbar />
      <FormatBar />
      <div className="h-[768px] flex shrink-0">
        <ToolRail />
        <PagesPanel />
        <DocArea />
        <div className="w-[18px] bg-[#2f2f2f] flex flex-col items-center shrink-0">
          <div className="h-[24px] w-full bg-[#2a2a2a] flex items-center justify-center"><svg width="12" height="12" viewBox="0 0 12 12"><path d="M1 1l4 5-4 5M6 1l4 5-4 5" fill="none" stroke="#d8d8d8" /></svg></div>
          <div className="mt-[5px]"><Tri d="M5 0l5 8H0z" w={9} h={8} /></div>
          <div className="w-[7px] h-[158px] mt-[198px] rounded-[4px] bg-[#6a6a6a]" />
          <div className="mt-[344px]"><Tri d="M0 0h10L5 8z" w={9} h={8} /></div>
        </div>
        <RightPanel />
      </div>
      <Status />
      <Dialog />
    </div>
  );
}
